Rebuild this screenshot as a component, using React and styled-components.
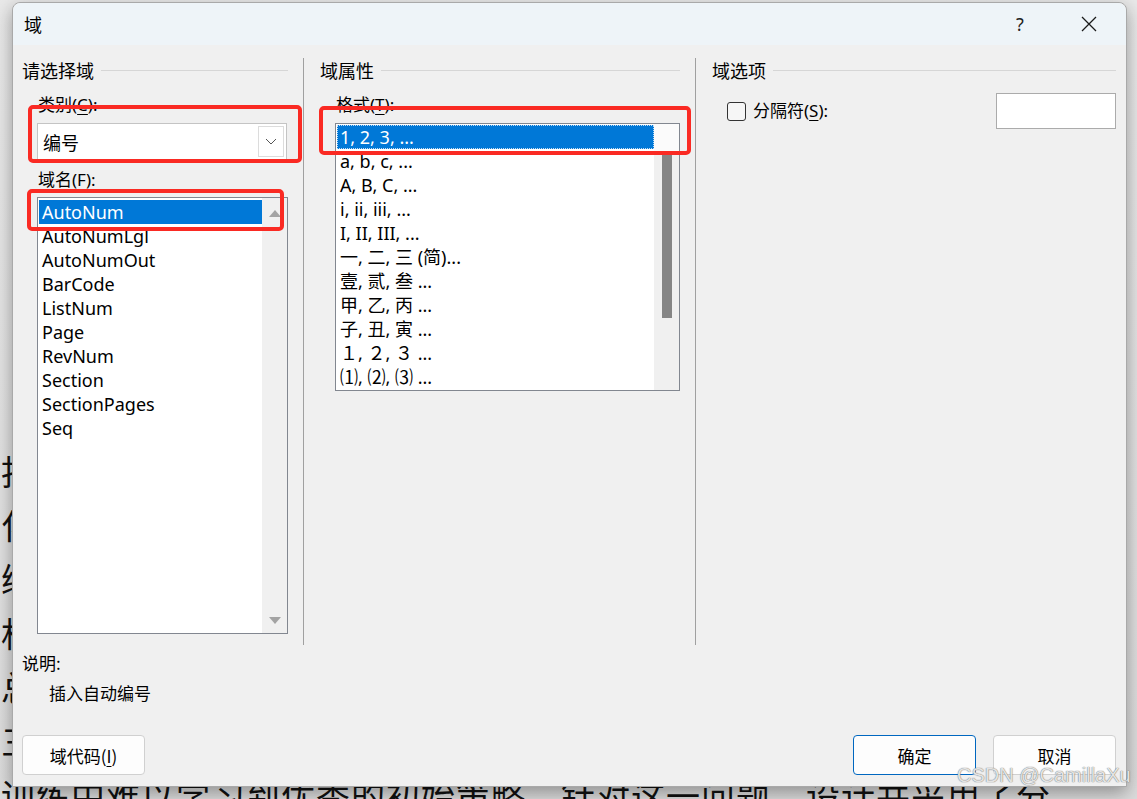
import React from 'react';
import styled, { createGlobalStyle } from 'styled-components';

const GlobalStyle = createGlobalStyle`
  html, body {
    margin: 0;
    padding: 0;
    width: 1137px;
    height: 799px;
    overflow: hidden;
  }
  body {
    font-family: "Noto Sans", "Noto Sans CJK SC", sans-serif;
    color: #000;
  }
`;

const docLines = [
  '扣除后的奖励信号作为训练目标，使智能体能够',
  '化为连续的控制决策，从而提升整体的收敛效率',
  '练过程中所采集的样本分布存在明显的偏移问题',
  '机制，在每一轮迭代中对经验回放进行重新加权',
  '总体而言，该方法在多个基准任务上表现出色，',
  '三个方面的改进能够有效缓解稀疏奖励带来的影响',
  '训练中难以学习到优秀的初始策略，针对这一问题，设计并采用了分',
];

const fieldNames = [
  'AutoNum',
  'AutoNumLgl',
  'AutoNumOut',
  'BarCode',
  'ListNum',
  'Page',
  'RevNum',
  'Section',
  'SectionPages',
  'Seq',
];

const formats = [
  '1, 2, 3, ...',
  'a, b, c, ...',
  'A, B, C, ...',
  'i, ii, iii, ...',
  'I, II, III, ...',
  '一, 二, 三 (简)...',
  '壹, 贰, 叁 ...',
  '甲, 乙, 丙 ...',
  '子, 丑, 寅 ...',
  '１, ２, ３ ...',
  '⑴, ⑵, ⑶ ...',
];

const App = () => {
  return (
    <>
      <GlobalStyle />
      <Desktop>
        <Doc>
          {docLines.map((line) => (
            <DocLine key={line}>{line}</DocLine>
          ))}
        </Doc>

        <Dialog>
          <TitleBar>
            <Title>域</Title>
            <TitleButtons>
              <HelpButton>?</HelpButton>
              <CloseButton>
                <svg width="16" height="16" viewBox="0 0 16 16">
                  <path d="M1 1 L15 15 M15 1 L1 15" stroke="#1a1a1a" strokeWidth="1.3" fill="none" />
                </svg>
              </CloseButton>
            </TitleButtons>
          </TitleBar>

          <Body>
            <Columns>
              <Column>
                <GroupHeading>请选择域</GroupHeading>
                <FieldLabel $top={11}>
                  类别(<Accel>C</Accel>):
                </FieldLabel>
                <Combo>
                  <ComboText>编号</ComboText>
                  <ComboButton>
                    <svg width="12" height="7" viewBox="0 0 12 7">
                      <path d="M1 1 L6 6 L11 1" stroke="#555" strokeWidth="1" fill="none" />
                    </svg>
                  </ComboButton>
                </Combo>
                <FieldLabel $top={8}>
                  域名(<Accel>F</Accel>):
                </FieldLabel>
                <ListBox $height={437} $width={251} $top={5}>
                  <ListItems $padTop={2}>
                    {fieldNames.map((name, i) => (
                      <ListRow key={name} $selected={i === 0}>
                        {name}
                      </ListRow>
                    ))}
                  </ListItems>
                  <ArrowTrack>
                    <Arrow $dir="up" />
                    <Arrow $dir="down" />
                  </ArrowTrack>
                </ListBox>
              </Column>

              <Column $divided>
                <GroupHeading>域属性</GroupHeading>
                <FieldLabel $top={11}>
                  格式(<Accel>T</Accel>):
                </FieldLabel>
                <ListBox $height={268} $width={345} $top={6}>
                  <ListItems $padTop={1}>
                    {formats.map((f, i) => (
                      <ListRow key={f} $selected={i === 0} $focus={i === 0}>
                        {f}
                      </ListRow>
                    ))}
                  </ListItems>
                  <ThumbTrack>
                    <Thumb />
                  </ThumbTrack>
                </ListBox>
              </Column>

              <Column $divided>
                <GroupHeading>域选项</GroupHeading>
                <OptionRow>
                  <CheckLabel>
                    <CheckBox />
                    <span>
                      分隔符(<Accel>S</Accel>):
                    </span>
                  </CheckLabel>
                  <TextInput />
                </OptionRow>
              </Column>
            </Columns>

            <Description>
              <DescTitle>说明:</DescTitle>
              <DescText>插入自动编号</DescText>
            </Description>

            <Footer>
              <Button>
                <span>
                  域代码(<Accel>I</Accel>)
                </span>
              </Button>
              <ButtonGroup>
                <Button $primary>确定</Button>
                <Button>取消</Button>
              </ButtonGroup>
            </Footer>
          </Body>

          <Annotation style={{ left: 15, top: 102, width: 274, height: 58 }} />
          <Annotation style={{ left: 14, top: 186, width: 257, height: 42 }} />
          <Annotation style={{ left: 306, top: 103, width: 372, height: 49 }} />
        </Dialog>

        <Watermark>CSDN @CamillaXu</Watermark>
      </Desktop>
    </>
  );
};

export default App;

// Styled Components
const Desktop = styled.div`
  position: relative;
  width: 1137px;
  height: 799px;
  overflow: hidden;
  background: linear-gradient(#e9e9e9, #dcdcdc);
`;

const Doc = styled.div`
  padding: 444px 0 0 1px;
  font-family: "Noto Sans CJK SC", sans-serif;
  font-size: 34px;
  line-height: 54px;
  color: #111;
`;

const DocLine = styled.div`
  white-space: nowrap;
  letter-spacing: 1px;
`;

const Dialog = styled.div`
  position: absolute;
  left: 12px;
  top: 2px;
  width: 1115px;
  height: 785px;
  box-sizing: border-box;
  display: flex;
  flex-direction: column;
  background: #f0f0f0;
  border: 1px solid #a9a9a9;
  border-radius: 8px 8px 0 0;
  box-shadow: 0 6px 18px rgba(0, 0, 0, 0.35);
`;

const TitleBar = styled.div`
  height: 42px;
  flex-shrink: 0;
  display: flex;
  align-items: center;
  justify-content: space-between;
  padding: 0 0 0 11px;
  background: #eef4f8;
  border-radius: 8px 8px 0 0;
`;

const Title = styled.div`
  font-size: 18px;
  line-height: 24px;
  font-family: "Noto Sans CJK SC", sans-serif;
`;

const TitleButtons = styled.div`
  display: flex;
  align-items: center;
`;

const HelpButton = styled.div`
  width: 46px;
  text-align: center;
  font-size: 18px;
  font-family: "Noto Sans", sans-serif;
  color: #222;
  margin-right: 9px;
`;

const CloseButton = styled.div`
  width: 74px;
  height: 42px;
  display: flex;
  align-items: center;
  justify-content: center;
`;

const Body = styled.div`
  flex: 1;
  display: flex;
  flex-direction: column;
  padding: 13px 10px 0 9px;
`;

const Columns = styled.div`
  display: grid;
  grid-template-columns: 281px 392px 1fr;
  height: 587px;
`;

const Column = styled.div`
  display: flex;
  flex-direction: column;
  padding: ${(p) => (p.$divided ? '0 0 0 16px' : '0 15px 0 0')};
  border-left: ${(p) => (p.$divided ? '1px solid #a0a0a0' : 'none')};
  &:nth-child(2) {
    padding-right: 15px;
  }
`;

const GroupHeading = styled.div`
  display: flex;
  align-items: center;
  font-size: 18px;
  line-height: 24px;
  font-family: "Noto Sans CJK SC", sans-serif;
  white-space: nowrap;

  &::after {
    content: '';
    flex: 1;
    margin-left: 7px;
    border-top: 1px solid #d6d6d6;
  }
`;

const FieldLabel = styled.div`
  margin: ${(p) => p.$top}px 0 0 16px;
  font-size: 17px;
  line-height: 24px;
`;

const Accel = styled.span`
  text-decoration: underline;
  text-underline-offset: 3px;
  text-decoration-thickness: 1px;
`;

const Combo = styled.div`
  margin: 6px 0 0 15px;
  width: 250px;
  height: 37px;
  box-sizing: border-box;
  display: flex;
  align-items: center;
  justify-content: space-between;
  padding: 2px 2px 2px 5px;
  background: #fff;
  border: 1px solid #c4c4c4;
`;

const ComboText = styled.span`
  font-size: 18px;
  font-family: "Noto Sans CJK SC", sans-serif;
`;

const ComboButton = styled.div`
  width: 26px;
  height: 31px;
  box-sizing: border-box;
  display: flex;
  align-items: center;
  justify-content: center;
  border: 1px solid #dcdcdc;
  background: #fff;
`;

const ListBox = styled.div`
  margin: ${(p) => p.$top}px 0 0 15px;
  width: ${(p) => p.$width}px;
  height: ${(p) => p.$height}px;
  box-sizing: border-box;
  display: flex;
  background: #fff;
  border: 1px solid #828790;
  overflow: hidden;
`;

const ListItems = styled.div`
  flex: 1;
  padding: ${(p) => p.$padTop}px 0 0 1px;
  overflow: hidden;
`;

const ListRow = styled.div`
  height: 24px;
  box-sizing: border-box;
  padding-left: 2px;
  font-size: 18px;
  line-height: 23px;
  white-space: nowrap;
  background: ${(p) => (p.$selected ? '#0078d7' : 'transparent')};
  color: ${(p) => (p.$selected ? '#fff' : '#000')};
  border: ${(p) => (p.$focus ? '1px dotted rgba(255, 255, 255, 0.75)' : '1px solid transparent')};
`;

const ArrowTrack = styled.div`
  width: 25px;
  display: flex;
  flex-direction: column;
  justify-content: space-between;
  align-items: center;
  padding: 12px 0 9px;
  background: #f0f0f0;
`;

const Arrow = styled.div`
  width: 0;
  height: 0;
  border-left: 6px solid transparent;
  border-right: 6px solid transparent;
  ${(p) =>
    p.$dir === 'up'
      ? 'border-bottom: 7px solid #a3a3a3;'
      : 'border-top: 7px solid #a3a3a3;'}
`;

const ThumbTrack = styled.div`
  width: 25px;
  display: flex;
  justify-content: center;
  padding-top: 29px;
  background: linear-gradient(#fbfbfb 0 27px, #f0f0f0 27px);
`;

const Thumb = styled.div`
  width: 10px;
  height: 165px;
  background: #858585;
`;

const OptionRow = styled.div`
  margin: 11px 0 0 15px;
  display: flex;
  align-items: center;
  justify-content: space-between;
`;

const CheckLabel = styled.label`
  display: flex;
  align-items: center;
  gap: 7px;
  font-size: 17px;
  line-height: 24px;
`;

const CheckBox = styled.span`
  width: 19px;
  height: 19px;
  box-sizing: border-box;
  border: 1px solid #333;
  border-radius: 3px;
  background: #f6f6f6;
`;

const TextInput = styled.div`
  width: 120px;
  height: 36px;
  box-sizing: border-box;
  background: #fff;
  border: 1px solid #ababab;
`;

const Description = styled.div`
  margin-top: 6px;
  display: flex;
  flex-direction: column;
  gap: 6px;
  font-family: "Noto Sans CJK SC", sans-serif;
  font-size: 17px;
  line-height: 24px;
`;

const DescTitle = styled.div``;

const DescText = styled.div`
  padding-left: 27px;
`;

const Footer = styled.div`
  margin-top: 30px;
  display: flex;
  justify-content: space-between;
  align-items: center;
`;

const ButtonGroup = styled.div`
  display: flex;
  gap: 17px;
`;

const Button = styled.div`
  width: 123px;
  height: 40px;
  box-sizing: border-box;
  display: flex;
  align-items: center;
  justify-content: center;
  font-family: "Noto Sans CJK SC", sans-serif;
  font-size: 17px;
  background: #fdfdfd;
  border: ${(p) => (p.$primary ? '1.5px solid #0067c0' : '1px solid #d0d0d0')};
  border-radius: 4px;
`;

const Annotation = styled.div`
  position: absolute;
  box-sizing: border-box;
  border: 4px solid #fa2a23;
  border-radius: 5px;
  pointer-events: none;
`;

const Watermark = styled.div`
  position: absolute;
  left: 957px;
  top: 764px;
  font-family: "Liberation Sans", Arial, sans-serif;
  font-size: 20px;
  color: rgba(240, 240, 240, 0.92);
  text-shadow: 0 0 1px rgba(90, 90, 90, 0.8), 0 0 1px rgba(90, 90, 90, 0.6);
  white-space: nowrap;
`;
